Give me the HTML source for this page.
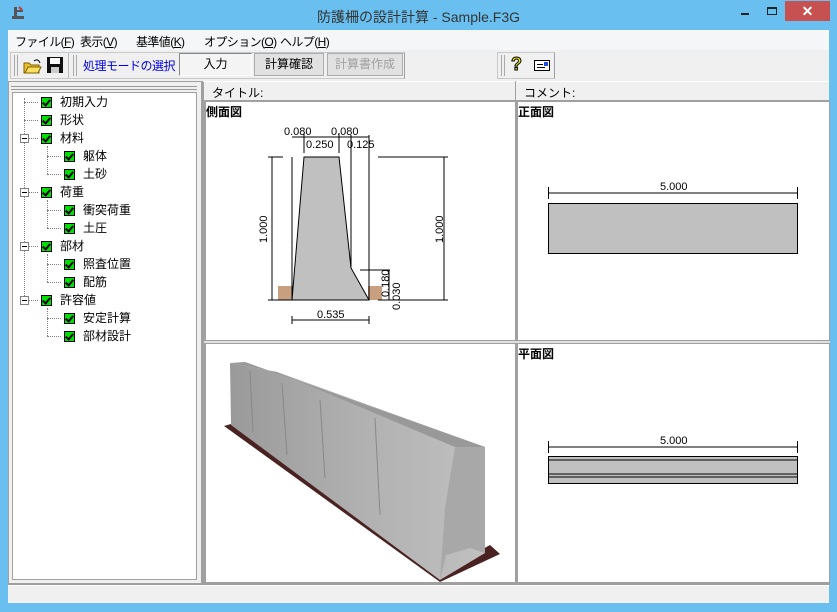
<!DOCTYPE html>
<html><head><meta charset="utf-8"><style>
*{margin:0;padding:0;box-sizing:border-box}
body{width:837px;height:612px;background:#69c0f0;position:relative;overflow:hidden;font-family:"Liberation Sans","Noto Sans CJK JP",sans-serif;font-size:12px;color:#000}
.a{position:absolute}
.tree .t{position:absolute;height:16px;line-height:16px;font-size:12px}
.cb{position:absolute;width:11px;height:11px;background:#00e000;border:1px solid #000}
.cb:after{content:"";position:absolute;left:2px;top:0px;width:3px;height:6px;border:solid #000;border-width:0 2px 2px 0;transform:rotate(40deg)}
.pm{position:absolute;width:9px;height:9px;border:1px solid #808080;background:#fff}
.pm:after{content:"";position:absolute;left:1px;top:3px;width:5px;height:1px;background:#000}
.dv{position:absolute;display:block;width:1px;border-left:1px dotted #808080}
.dh{position:absolute;display:block;height:1px;border-top:1px dotted #808080}
.btn{position:absolute;top:53px;height:23px;line-height:21px;text-align:center;font-size:12px;border:1px solid #adadad;background:#e1e1e1}
.lbl{font-weight:bold;font-size:12px;position:absolute}
.m{position:absolute;top:33px;letter-spacing:-0.6px}
</style></head><body>
<div class="a" style="left:8px;top:4px;width:20px;height:18px">
<svg width="20" height="18"><path d="M6 3h3v9H6z M9 6h6v2H9z M4 12h12v3H4z" fill="#555"/><path d="M11 3l3 3" stroke="#c33" stroke-width="2"/></svg></div>
<div class="a" style="left:0;top:7px;width:837px;text-align:center;font-size:14px;color:#333">防護柵の設計計算 - Sample.F3G</div>
<div class="a" style="left:741px;top:13px;width:8px;height:2px;background:#222"></div>
<div class="a" style="left:767px;top:7px;width:10px;height:8px;border:1px solid #222;border-top-width:2px"></div>
<div class="a" style="left:785px;top:1px;width:45px;height:20px;background:#c75050;color:#fff;text-align:center;font-size:14px;line-height:20px;font-weight:bold">✕</div>
<div class="a" style="left:8px;top:30px;width:821px;height:573px;background:#f0f0f0"></div>
<div class="a" style="left:8px;top:30px;width:821px;height:20px;background:#f5f6f7"></div>
<div class="m" style="left:15px">ファイル(<u>F</u>)</div>
<div class="m" style="left:80px">表示(<u>V</u>)</div>
<div class="m" style="left:136px">基準値(<u>K</u>)</div>
<div class="m" style="left:204px">オプション(<u>O</u>)</div>
<div class="m" style="left:280px">ヘルプ(<u>H</u>)</div>
<div class="a" style="left:10px;top:52px;width:395px;height:27px;border:1px solid #c8c8c8;border-right-color:#a0a0a0"></div>
<div class="a" style="left:14px;top:55px;width:4px;height:21px;border-left:1px solid #aaa;border-right:1px solid #aaa"></div>
<div class="a" style="left:22px;top:57px"><svg width="20" height="18"><path d="M2 6h5l2 2h8v8H2z" fill="#e8c030" stroke="#806000"/><path d="M3 16l3-6h13l-3 6z" fill="#f8e060" stroke="#806000"/><path d="M12 4q4-3 6 2" stroke="#000" fill="none"/></svg></div>
<div class="a" style="left:46px;top:56px"><svg width="18" height="18"><path d="M1 1h16v16H1z" fill="#111"/><rect x="4" y="2" width="10" height="6" fill="#fff"/><rect x="5" y="11" width="8" height="6" fill="#ccc"/></svg></div>
<div class="a" style="left:68px;top:53px;width:1px;height:25px;background:#bbb"></div>
<div class="a" style="left:73px;top:55px;width:4px;height:21px;border-left:1px solid #aaa;border-right:1px solid #aaa"></div>
<div class="a" style="left:83px;top:57px;color:#0000e0;letter-spacing:-0.5px">処理モードの選択</div>
<div class="btn" style="left:179px;width:73px;background:#f4f4f4;border-color:#888 #fff #fff #888">入力</div>
<div class="btn" style="left:254px;width:70px">計算確認</div>
<div class="btn" style="left:327px;width:76px;color:#a0a0a0">計算書作成</div>
<div class="a" style="left:497px;top:52px;width:58px;height:27px;border:1px solid #c8c8c8;border-right-color:#a0a0a0"></div>
<div class="a" style="left:501px;top:55px;width:4px;height:21px;border-left:1px solid #aaa;border-right:1px solid #aaa"></div>
<div class="a" style="left:511px;top:54px;font-size:18px;font-weight:bold;color:#ee0;-webkit-text-stroke:1px #000">?</div>
<div class="a" style="left:534px;top:60px;width:16px;height:11px;border:1px solid #000;background:#fff"><div class="a" style="left:2px;top:3px;width:6px;height:1px;background:#000"></div><div class="a" style="left:2px;top:6px;width:8px;height:1px;background:#000"></div><div class="a" style="right:1px;top:1px;width:4px;height:4px;background:#2050e0"></div></div>
<div class="a" style="left:8px;top:81px;width:196px;height:503px;border:1px solid #a0a0a0;border-right-width:3px"></div>
<div class="a" style="left:11px;top:86px;width:186px;height:4px;border-top:1px solid #999;border-bottom:1px solid #999"></div>
<div class="a" style="left:12px;top:92px;width:185px;height:488px;background:#fff;border:1px solid #a0a0a0"></div>
<div class="tree">
<span class="dv" style="left:24px;top:98px;height:202px"></span>
<span class="dv" style="left:47px;top:146px;height:28px"></span>
<span class="dv" style="left:47px;top:200px;height:28px"></span>
<span class="dv" style="left:47px;top:254px;height:28px"></span>
<span class="dv" style="left:47px;top:308px;height:28px"></span>
<span class="dh" style="left:24px;top:102px;width:14px"></span>
<span class="dh" style="left:24px;top:120px;width:14px"></span>
<span class="pm" style="left:20px;top:134px"></span><span class="dh" style="left:29px;top:138px;width:9px"></span>
<span class="pm" style="left:20px;top:188px"></span><span class="dh" style="left:29px;top:192px;width:9px"></span>
<span class="pm" style="left:20px;top:242px"></span><span class="dh" style="left:29px;top:246px;width:9px"></span>
<span class="pm" style="left:20px;top:296px"></span><span class="dh" style="left:29px;top:300px;width:9px"></span>
<span class="dh" style="left:47px;top:156px;width:14px"></span><span class="dh" style="left:47px;top:174px;width:14px"></span>
<span class="dh" style="left:47px;top:210px;width:14px"></span><span class="dh" style="left:47px;top:228px;width:14px"></span>
<span class="dh" style="left:47px;top:264px;width:14px"></span><span class="dh" style="left:47px;top:282px;width:14px"></span>
<span class="dh" style="left:47px;top:318px;width:14px"></span><span class="dh" style="left:47px;top:336px;width:14px"></span>
<span class="cb" style="left:41px;top:97px"></span><div class="t" style="left:60px;top:94px">初期入力</div>
<span class="cb" style="left:41px;top:115px"></span><div class="t" style="left:60px;top:112px">形状</div>
<span class="cb" style="left:41px;top:133px"></span><div class="t" style="left:60px;top:130px">材料</div>
<span class="cb" style="left:64px;top:151px"></span><div class="t" style="left:83px;top:148px">躯体</div>
<span class="cb" style="left:64px;top:169px"></span><div class="t" style="left:83px;top:166px">土砂</div>
<span class="cb" style="left:41px;top:187px"></span><div class="t" style="left:60px;top:184px">荷重</div>
<span class="cb" style="left:64px;top:205px"></span><div class="t" style="left:83px;top:202px">衝突荷重</div>
<span class="cb" style="left:64px;top:223px"></span><div class="t" style="left:83px;top:220px">土圧</div>
<span class="cb" style="left:41px;top:241px"></span><div class="t" style="left:60px;top:238px">部材</div>
<span class="cb" style="left:64px;top:259px"></span><div class="t" style="left:83px;top:256px">照査位置</div>
<span class="cb" style="left:64px;top:277px"></span><div class="t" style="left:83px;top:274px">配筋</div>
<span class="cb" style="left:41px;top:295px"></span><div class="t" style="left:60px;top:292px">許容値</div>
<span class="cb" style="left:64px;top:313px"></span><div class="t" style="left:83px;top:310px">安定計算</div>
<span class="cb" style="left:64px;top:331px"></span><div class="t" style="left:83px;top:328px">部材設計</div>
</div>
<div class="a" style="left:203px;top:81px;width:626px;height:21px;border-top:1px solid #fff;border-bottom:2px solid #a0a0a0"></div>
<div class="a" style="left:203px;top:81px;width:313px;height:20px;border-right:1px solid #a0a0a0"></div>
<div class="a" style="left:212px;top:84px">タイトル:</div>
<div class="a" style="left:524px;top:84px">コメント:</div>
<div class="a" style="left:204px;top:102px;width:626px;height:483px;background:#a0a0a0"></div>
<div class="a" style="left:206px;top:102px;width:309px;height:238px;background:#fff"></div>
<div class="a" style="left:518px;top:102px;width:311px;height:238px;background:#fff"></div>
<div class="a" style="left:206px;top:344px;width:309px;height:238px;background:#fff"></div>
<div class="a" style="left:518px;top:344px;width:311px;height:238px;background:#fff"></div>
<div class="a" style="left:204px;top:341px;width:626px;height:2px;background:#e0e0e0"></div>
<div class="lbl" style="left:206px;top:103px">側面図</div>
<div class="lbl" style="left:518px;top:103px">正面図</div>
<div class="lbl" style="left:518px;top:345px">平面図</div>
<svg class="a" style="left:0;top:0" width="837" height="612" font-family="Liberation Sans Narrow, Liberation Sans, sans-serif" font-size="11">
<g stroke="#000" stroke-width="1" fill="none">
<rect x="278" y="286" width="14" height="14" fill="#c8a080" stroke="none"/>
<rect x="368" y="286" width="14" height="14" fill="#c8a080" stroke="none"/>
<path d="M304 157H339L351 268L369 300H292Z" fill="#c0c0c0"/>
<path d="M292 300V157 M369 300V135 M351 268V135"/>
<path d="M272 157V300 M268 157H283 M268 300H292 M444 157V300 M378 157H448 M378 300H448 M360 270H390 M389 270V300"/>
<path d="M292 137H369 M304 133V153 M339 133V153 M292 320H369 M292 316V324 M369 316V324"/>
</g>
<g font-size="11">
<text x="284" y="135">0.080</text><text x="331" y="135">0.080</text>
<text x="306" y="148">0.250</text><text x="347" y="148">0.125</text>
<text x="317" y="318">0.535</text>
<text transform="translate(267,243) rotate(-90)">1.000</text>
<text transform="translate(443,243) rotate(-90)">1.000</text>
<text transform="translate(389,297) rotate(-90)">0.180</text>
<text transform="translate(400,310) rotate(-90)">0.030</text>
</g>
<rect x="548.5" y="203.5" width="249" height="50" fill="#c0c0c0" stroke="#000"/>
<path d="M548.5 193H797.5 M548.5 187V199 M797.5 187V199" stroke="#000"/>
<text x="660" y="190">5.000</text>
<rect x="548.5" y="456.5" width="249" height="27" fill="#c0c0c0" stroke="#000"/>
<path d="M548.5 460H797.5 M548.5 474H797.5 M548.5 477H797.5" stroke="#000"/>
<path d="M548.5 447H797.5 M548.5 441V453 M797.5 441V453" stroke="#000"/>
<text x="660" y="444">5.000</text>
<defs><linearGradient id="g1" x1="0" y1="0" x2="1" y2="0"><stop offset="0" stop-color="#9a9a9a"/><stop offset="0.5" stop-color="#b0b0b0"/><stop offset="1" stop-color="#c0c0c0"/></linearGradient></defs>
<path d="M224 426L440 582L500 554L490 545L445 570L231 424Z" fill="#4a2222"/>
<path d="M230 363L277 372L485 447L485 553L440 580L231 425Z" fill="url(#g1)"/>
<path d="M230 363L245 362L485 447L455 447L277 372Z" fill="#999"/>
<path d="M455 447L485 447L485 553L470 548L446 555L440 580L445 508Z" fill="#a8a8a8"/>
<path d="M250 371L253 432 M282 383L287 455 M320 400L325 478 M375 418L380 515" stroke="#888" fill="none"/>
</svg>
<div class="a" style="left:8px;top:584px;width:821px;height:1px;background:#a0a0a0"></div>
<div class="a" style="left:8px;top:585px;width:821px;height:18px;background:#f0f0f0;border-top:1px solid #fff"></div>
</body></html>
